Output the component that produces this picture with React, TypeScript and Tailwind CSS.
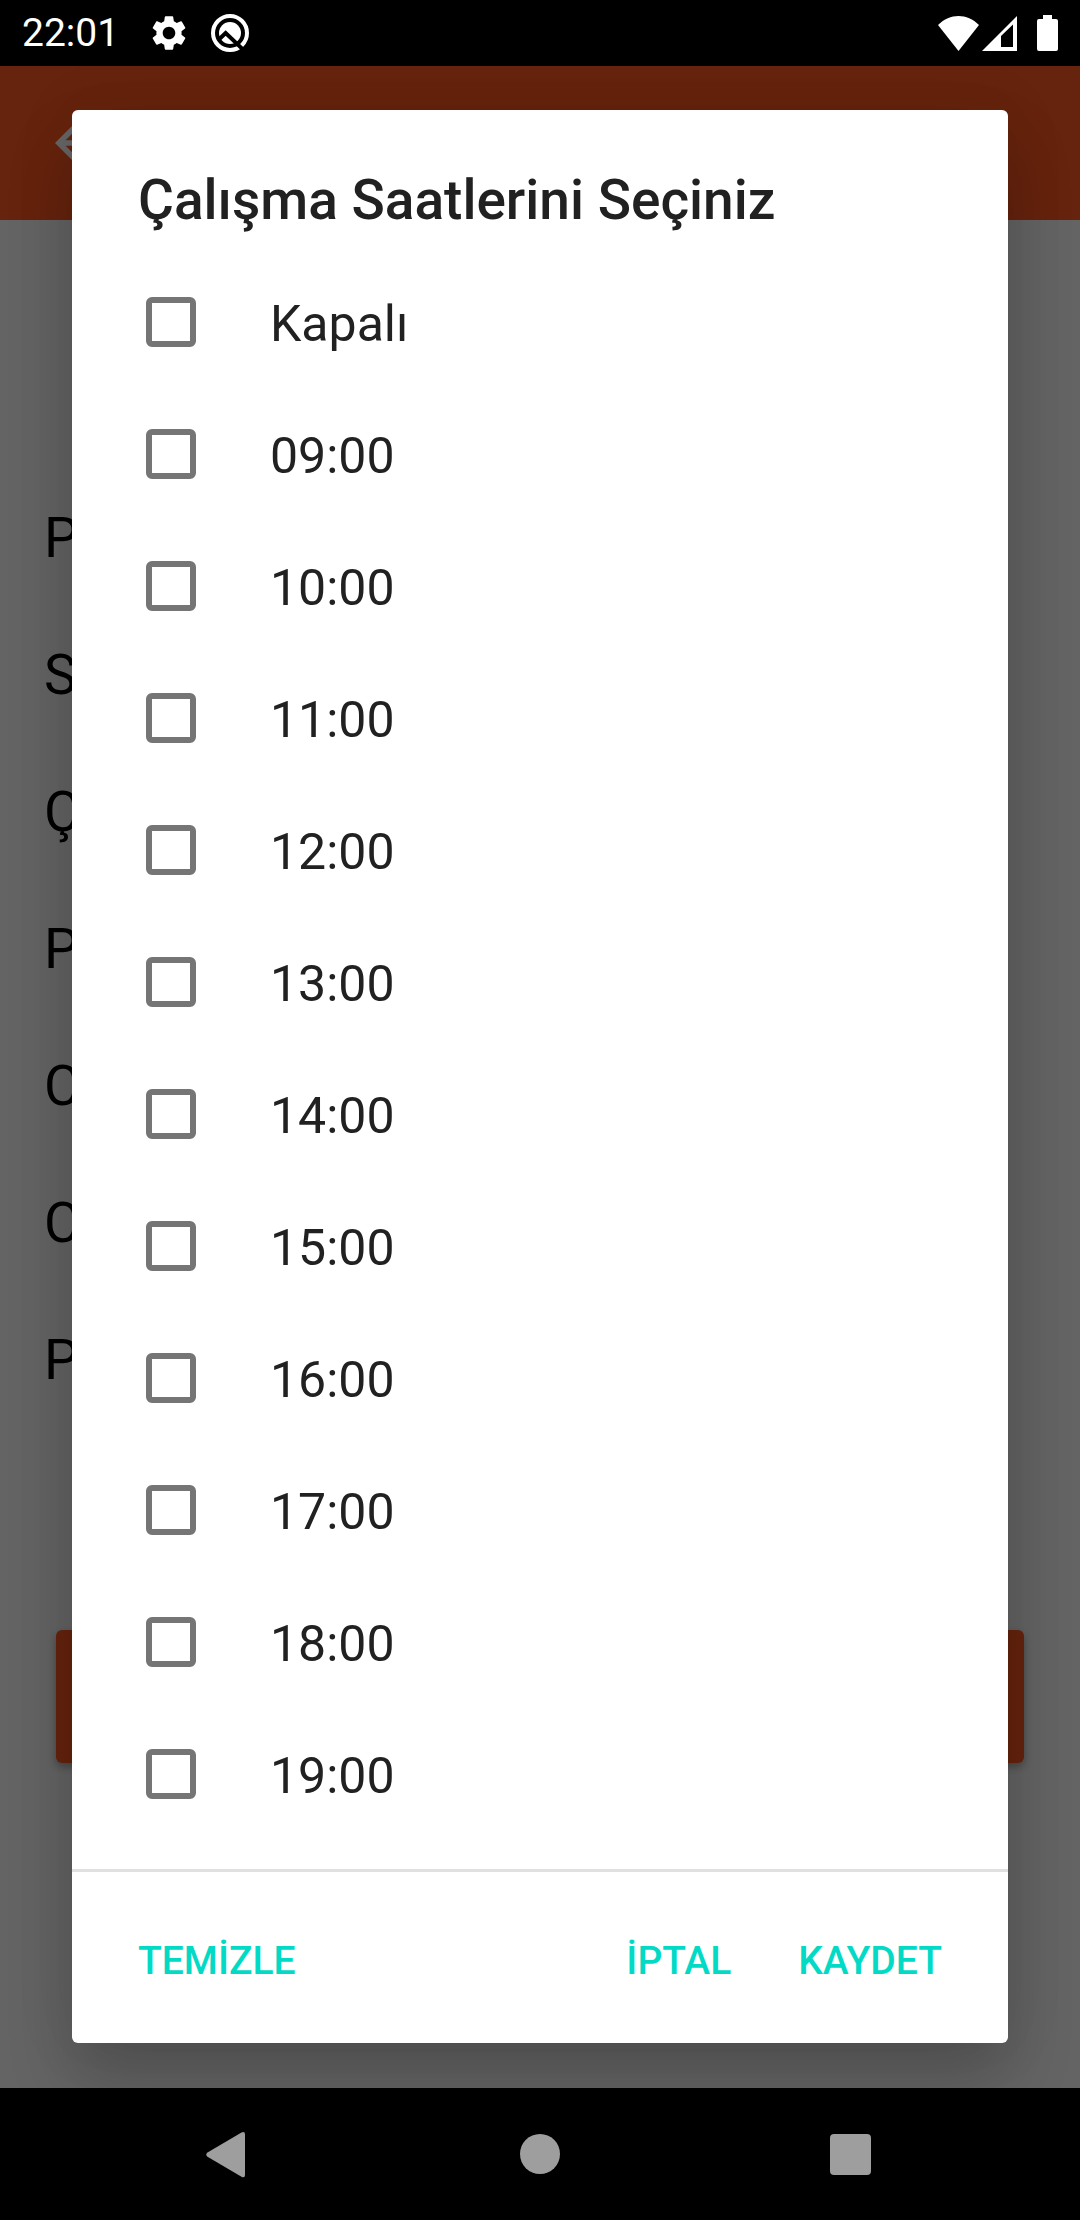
import { MdArrowBack, MdSettings } from "react-icons/md";

const dayInitials = ["P", "S", "Ç", "P", "C", "C", "P"];

const hours = [
  "Kapalı",
  "09:00",
  "10:00",
  "11:00",
  "12:00",
  "13:00",
  "14:00",
  "15:00",
  "16:00",
  "17:00",
  "18:00",
  "19:00",
];

function BuildIcon() {
  return (
    <svg viewBox="0 0 114 114" className="size-[38px]" aria-hidden="true">
      <circle cx="57" cy="57" r="51" fill="none" stroke="#fff" strokeWidth="12" />
      <circle cx="57" cy="57" r="33" fill="#fff" />
      <path d="M22 78 L44 57 L102 112" fill="none" stroke="#000" strokeWidth="12" />
    </svg>
  );
}

function StatusBar() {
  return (
    <header className="flex h-[66px] shrink-0 items-center justify-between bg-black px-[22px] text-white">
      <div className="flex items-center">
        <span className="text-[39px] leading-[46px]">22:01</span>
        <MdSettings className="ml-[29px] size-[42px]" aria-hidden="true" />
        <span className="ml-[21px]">
          <BuildIcon />
        </span>
      </div>
      <div className="flex items-center">
        <svg viewBox="0 0 41 35" className="h-[35px] w-[41px]" fill="#fff" aria-hidden="true">
          <path d="M0 9 C12 -3 29 -3 41 9 L20.500 35 Z" />
        </svg>
        <svg viewBox="0 0 35 35" className="ml-[3px] size-[35px]" fill="#fff" aria-hidden="true">
          <path fillRule="evenodd" d="M0 35 L35 0 V35 Z M19 20 V31 H31 V8.500 Z" />
        </svg>
        <svg viewBox="0 0 21 36" className="ml-5 h-9 w-[21px]" fill="#fff" aria-hidden="true">
          <path d="M6 0 H15 V4 H19 Q21 4 21 6 V34 Q21 36 19 36 H2 Q0 36 0 34 V6 Q0 4 2 4 H6 Z" />
        </svg>
      </div>
    </header>
  );
}

function SchedulePage() {
  return (
    <div className="flex flex-1 flex-col bg-[#fafafa]" aria-hidden="true">
      <div className="flex h-[154px] items-center bg-[#ff5722] px-11 text-white">
        <MdArrowBack className="size-[66px]" />
      </div>
      <ul className="mt-[250px] flex flex-col px-11 text-[55px] text-black">
        {dayInitials.map((day, index) => (
          <li key={index} className="h-[137px] leading-[137px]">
            {day}
          </li>
        ))}
      </ul>
      <div className="mx-14 mt-[201px] h-[133px] rounded-md bg-[#ff5722] shadow-[0_4px_8px_rgba(0,0,0,0.3)]" />
    </div>
  );
}

function HoursDialog() {
  return (
    <section
      role="dialog"
      aria-modal="true"
      aria-labelledby="dialog-title"
      className="flex w-full flex-col overflow-hidden rounded-md bg-white text-[#212121] shadow-[0_0_66px_rgba(0,0,0,0.07),0_36px_66px_rgba(0,0,0,0.2)]"
    >
      <h1 id="dialog-title" className="px-[66px] pt-[50px] pb-4 text-[55px] leading-[80px] font-medium">
        Çalışma Saatlerini Seçiniz
      </h1>
      <ul className="pb-[29px]">
        {hours.map((hour) => (
          <li key={hour}>
            <label className="flex h-[132px] items-center pl-[74px] text-[50px] leading-[60px]">
              <input
                type="checkbox"
                className="mr-[74px] size-[50px] shrink-0 appearance-none rounded-md border-[6px] border-[#757575] checked:bg-[#03dac5]"
              />
              <span className="pt-1">{hour}</span>
            </label>
          </li>
        ))}
      </ul>
      <footer className="flex h-[174px] items-center border-t-[3px] border-[#e0e0e0] px-[66px] pt-1.5 text-[39px] leading-[46px] font-medium text-[#03dac5]">
        <button type="button">TEMİZLE</button>
        <button type="button" className="mr-[67px] ml-auto">
          İPTAL
        </button>
        <button type="button">KAYDET</button>
      </footer>
    </section>
  );
}

function NavigationBar() {
  return (
    <nav className="flex h-[132px] shrink-0 items-center justify-center gap-[248px] bg-black">
      <button type="button" aria-label="Geri">
        <svg viewBox="0 0 66 66" className="size-[66px]" fill="#9e9e9e" aria-hidden="true">
          <path d="M14.500 31.500 L48.500 11.600 Q52 10 52 13.500 V54 Q52 57.500 48.500 55.800 L14.500 35.800 Q12 33.700 14.500 31.500 Z" />
        </svg>
      </button>
      <button type="button" aria-label="Ana ekran">
        <svg viewBox="0 0 66 66" className="size-[66px]" fill="#9e9e9e" aria-hidden="true">
          <circle cx="33" cy="33" r="20" />
        </svg>
      </button>
      <button type="button" aria-label="Son uygulamalar">
        <svg viewBox="0 0 66 66" className="size-[66px]" fill="#9e9e9e" aria-hidden="true">
          <rect x="9" y="13" width="41" height="41" rx="4" />
        </svg>
      </button>
    </nav>
  );
}

export default function App() {
  return (
    <div className="flex min-h-screen flex-col font-[Roboto,sans-serif]">
      <StatusBar />
      <main className="relative flex flex-1 flex-col overflow-hidden">
        <SchedulePage />
        <div className="absolute inset-0 flex items-start bg-black/60 px-[72px] pt-11">
          <HoursDialog />
        </div>
      </main>
      <NavigationBar />
    </div>
  );
}
